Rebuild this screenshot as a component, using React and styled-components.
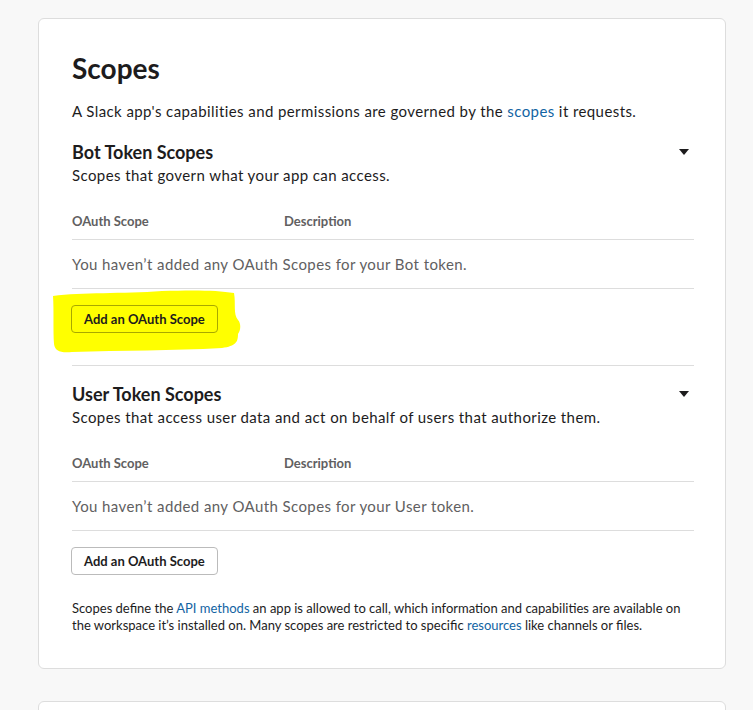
import React from 'react'
import styled, { createGlobalStyle } from 'styled-components'

const GlobalStyle = createGlobalStyle`
  html, body {
    margin: 0;
    padding: 0;
    background: #f8f8f8;
  }
  body {
    font-family: Lato, "Open Sans", "Liberation Sans", sans-serif;
    color: #1d1c1d;
    -webkit-font-smoothing: antialiased;
  }
`;

const Page = styled.div`
  padding: 18px 0 0 38px;
  height: 710px;
  overflow: hidden;
  box-sizing: border-box;
`;

const Card = styled.div`
  width: 688px;
  box-sizing: border-box;
  background: #fff;
  border: 1px solid #dddddd;
  border-radius: 6px;
  padding: ${p => (p.$empty ? '60px 32px' : '31px 31px 34px 33px')};
  margin-bottom: 32px;
`;

const Title = styled.h1`
  margin: 0;
  font-size: 28px;
  line-height: 36px;
  font-weight: 700;
`;

const Lead = styled.p`
  margin: 14px 0 0;
  font-size: 15px;
  line-height: 22px;
  letter-spacing: 0.41px;
`;

const Link = styled.a`
  color: #1264a3;
  text-decoration: none;
`;

const Section = styled.section`
  margin-top: ${p => p.$top}px;
`;

const SectionHead = styled.div`
  display: flex;
  justify-content: space-between;
  align-items: center;
`;

const SectionTitle = styled.h2`
  margin: 0;
  font-size: 18px;
  line-height: 24px;
  font-weight: 700;
`;

const Caret = styled.span`
  width: 0;
  height: 0;
  margin-right: 5px;
  border-left: 5px solid transparent;
  border-right: 5px solid transparent;
  border-top: 6px solid #1d1c1d;
`;

const SectionSub = styled.p`
  margin: 0;
  font-size: 15px;
  line-height: 22px;
  letter-spacing: 0.41px;
`;

const Table = styled.div`
  margin-top: 26px;
`;

const HeadRow = styled.div`
  display: grid;
  grid-template-columns: 212px 1fr;
  padding-bottom: 9px;
  border-bottom: 1px solid #dddddd;
  font-size: 13px;
  line-height: 18px;
  font-weight: 700;
  color: #616061;
`;

const EmptyRow = styled.div`
  padding: 13px 0 13px;
  border-bottom: 1px solid #dddddd;
  font-size: 15px;
  line-height: 22px;
  letter-spacing: 0.41px;
  color: #616061;
`;

const ButtonWrap = styled.div`
  position: relative;
  margin-top: 16px;
  margin-left: -1px;
  height: 28px;
`;

const Highlight = styled.svg`
  position: absolute;
  left: -19px;
  top: -15px;
  width: 190px;
  height: 64px;
`;

const Button = styled.button`
  position: relative;
  height: 28px;
  padding: 0 12px;
  font-family: inherit;
  font-size: 13px;
  font-weight: 700;
  color: #1d1c1d;
  background: ${p => (p.$marked ? 'transparent' : '#fff')};
  border: 1px solid ${p => (p.$marked ? '#a8a800' : '#bbbbbb')};
  border-radius: 4px;
`;

const Divider = styled.hr`
  margin: 32px 0 0;
  border: 0;
  border-top: 1px solid #dddddd;
`;

const Note = styled.p`
  margin: 25px 0 0;
  font-size: 13px;
  line-height: 17px;
`;

const ScopeSection = ({ title, sub, token, top, marked }) => (
  <Section $top={top}>
    <SectionHead>
      <SectionTitle>{title}</SectionTitle>
      <Caret />
    </SectionHead>
    <SectionSub>{sub}</SectionSub>
    <Table>
      <HeadRow>
        <span>OAuth Scope</span>
        <span>Description</span>
      </HeadRow>
      <EmptyRow>You haven’t added any OAuth Scopes for your {token} token.</EmptyRow>
    </Table>
    <ButtonWrap>
      {marked && (
        <Highlight viewBox="0 0 190 64">
          <path
            d="M1 6 C30 2 70 4 110 1 C140 0 165 0 182 3 C184 14 181 24 186 30 C189 33 189 40 186 44 C186 52 184 56 170 58 C120 61 70 60 20 62 C8 63 3 61 2 54 C1 40 2 20 1 6 Z"
            fill="#ffff00"
          />
        </Highlight>
      )}
      <Button $marked={marked}>Add an OAuth Scope</Button>
    </ButtonWrap>
  </Section>
);

const App = () => (
  <Page>
    <GlobalStyle />
    <Card>
      <Title>Scopes</Title>
      <Lead>
        A Slack app's capabilities and permissions are governed by the <Link>scopes</Link> it requests.
      </Lead>
      <ScopeSection
        top={18}
        title="Bot Token Scopes"
        sub="Scopes that govern what your app can access."
        token="Bot"
        marked
      />
      <Divider />
      <ScopeSection
        top={16}
        title="User Token Scopes"
        sub="Scopes that access user data and act on behalf of users that authorize them."
        token="User"
      />
      <Note>
        Scopes define the <Link>API methods</Link> an app is allowed to call, which information and capabilities are
        available on the workspace it’s installed on. Many scopes are restricted to specific <Link>resources</Link> like
        channels or files.
      </Note>
    </Card>
    <Card $empty />
  </Page>
);

export default App
